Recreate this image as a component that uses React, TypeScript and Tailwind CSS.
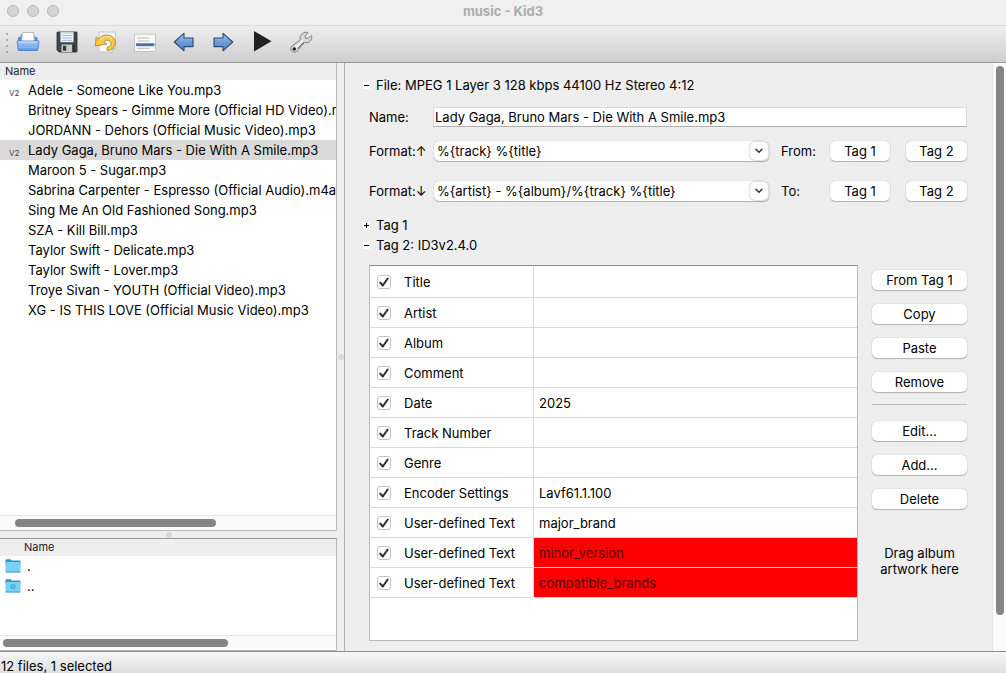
import React, { useState } from "react";

const files = [
  { name: "Adele - Someone Like You.mp3", tagged: true },
  { name: "Britney Spears - Gimme More (Official HD Video).mp3" },
  { name: "JORDANN - Dehors (Official Music Video).mp3" },
  { name: "Lady Gaga, Bruno Mars - Die With A Smile.mp3", tagged: true },
  { name: "Maroon 5 - Sugar.mp3" },
  { name: "Sabrina Carpenter - Espresso (Official Audio).m4a" },
  { name: "Sing Me An Old Fashioned Song.mp3" },
  { name: "SZA - Kill Bill.mp3" },
  { name: "Taylor Swift - Delicate.mp3" },
  { name: "Taylor Swift - Lover.mp3" },
  { name: "Troye Sivan - YOUTH (Official Video).mp3" },
  { name: "XG - IS THIS LOVE (Official Music Video).mp3" },
];

const frames = [
  { label: "Title", value: "" },
  { label: "Artist", value: "" },
  { label: "Album", value: "" },
  { label: "Comment", value: "" },
  { label: "Date", value: "2025" },
  { label: "Track Number", value: "" },
  { label: "Genre", value: "" },
  { label: "Encoder Settings", value: "Lavf61.1.100" },
  { label: "User-defined Text", value: "major_brand" },
  { label: "User-defined Text", value: "minor_version", invalid: true },
  { label: "User-defined Text", value: "compatible_brands", invalid: true },
];

function OpenIcon() {
  return (
    <svg width="24" height="24" viewBox="0 0 24 24" aria-hidden="true">
      <defs>
        <linearGradient id="tray" x1="0" y1="0" x2="0" y2="1">
          <stop offset="0" stopColor="#a9cdf5" />
          <stop offset="1" stopColor="#5c97de" />
        </linearGradient>
      </defs>
      <path d="M2.5 12V7.5H5V5h13v2.5h3V12z" fill="#5f93d3" stroke="#4f82c4" />
      <path d="M5.5 13L6.3 2.5h11.4L18.5 13z" fill="#fdfdfd" stroke="#a9adb3" strokeWidth=".8" />
      <path d="M1 11h22l-1.3 9.5H2.3z" fill="url(#tray)" stroke="#4c84cc" strokeWidth=".9" />
      <path d="M2 12h20" stroke="#cde2fa" />
      <path d="M3 17.5h18" stroke="#89b8ee" />
    </svg>
  );
}

function SaveIcon() {
  return (
    <svg width="24" height="24" viewBox="0 0 24 24" aria-hidden="true">
      <path d="M2 2.5Q2 2 2.5 2h19q.5 0 .5.5v19q0 .5-.5.5H4L2 20z" fill="#43474c" stroke="#25282b" strokeWidth=".8" />
      <path d="M5.5 2.2h13v10h-13z" fill="#f5f8fb" />
      <path d="M5.5 2.2h13v1.6h-13z" fill="#cfd6dd" />
      <path d="M7 5.5h10M7 8h10M7 10.4h10" stroke="#91b4d8" strokeWidth=".9" />
      <path d="M6.5 14.5h11V22h-11z" fill="#c9ccce" />
      <path d="M8 15.8h3.2v4.8H8z" fill="#303338" />
      <path d="M17.5 14.5h1.8V22h-1.8z" fill="#1f2225" />
    </svg>
  );
}

function RevertIcon() {
  return (
    <svg width="24" height="24" viewBox="0 0 24 24" aria-hidden="true">
      <path d="M5 2h16.5v16.5L18 22H5z" fill="#f7f7f7" stroke="#bdbdbd" strokeWidth=".8" />
      <path d="M21.5 18H18v4z" fill="#d5d5d5" stroke="#bdbdbd" strokeWidth=".6" />
      <path
        d="M2 7l2.8 2.2C7.5 4 16 3.6 19.8 8.2c4 5-.1 12.3-6.6 12.3v-3c4-1.1 4.6-4.1 2.8-6-2-2.1-4.8-1.3-6 .5l2.6 2L1.5 16z"
        fill="#f3c84b"
        stroke="#b78618"
        strokeWidth=".9"
        strokeLinejoin="round"
      />
      <path d="M6 10.2c3-4.8 9.3-4.8 12.3-1" fill="none" stroke="#fbe698" strokeWidth="1.2" />
    </svg>
  );
}

function PlaylistIcon() {
  return (
    <svg width="24" height="24" viewBox="0 0 24 24" aria-hidden="true">
      <path d="M1.5 4.5h21v17h-21z" fill="#fafafa" stroke="#b9bcc0" strokeWidth=".9" />
      <path d="M1.5 4.3h21" stroke="#d6d6d6" strokeWidth="1.4" />
      <path d="M4 8h12.5M5 11h11M4 18.3h13" stroke="#a9a9a9" strokeWidth=".8" />
      <path d="M3 13.2h18.5v3H3z" fill="#4f83bd" />
      <path d="M4 15h16" stroke="#28598f" strokeWidth=".7" />
    </svg>
  );
}

function ArrowIcon({ dir }: { dir: "left" | "right" }) {
  const id = "arrow-" + dir;
  return (
    <svg width="24" height="24" viewBox="0 0 24 24" aria-hidden="true">
      <defs>
        <linearGradient id={id} x1="0" y1="0" x2="0" y2="1">
          <stop offset="0" stopColor="#b1cae8" />
          <stop offset=".5" stopColor="#6e9bd2" />
          <stop offset="1" stopColor="#5588c6" />
        </linearGradient>
      </defs>
      <path
        d={dir === "left" ? "M2.3 12L12 3.4V8h9v8.6h-9v4.2z" : "M21.7 12L12 3.4V8H3v8.6h9v4.2z"}
        fill={"url(#" + id + ")"}
        stroke="#24497b"
        strokeWidth="1.1"
        strokeLinejoin="round"
      />
    </svg>
  );
}

function PlayIcon() {
  return (
    <svg width="24" height="24" viewBox="0 0 24 24" aria-hidden="true">
      <path d="M4 1l17.5 10.2L4 21.5z" fill="#222" />
    </svg>
  );
}

function WrenchIcon() {
  return (
    <svg width="24" height="24" viewBox="0 0 24 24" aria-hidden="true">
      <path
        d="M2 20c-.7-1.8.2-3.6 2-4.5l7.2-5.7C10.500 5.500 13.500 2 18 2.200l1 .6-3 3 .6 2.400 2.400.3 3.200-3 .6 1.200c.2 4.300-3.600 6.800-7.400 5.800L9.300 19.600C8.300 22.500 3.500 23.500 2 20z"
        fill="#d9dadb"
        stroke="#737577"
        strokeWidth=".9"
        strokeLinejoin="round"
      />
      <path d="M6.500 17.500l7.500-7" stroke="#fff" strokeWidth="1.500" />
      <path d="M8.800 18.500l6-6.300" stroke="#555" strokeWidth=".9" />
      <circle cx="5.300" cy="19" r="1.700" fill="#222" />
    </svg>
  );
}

function FolderIcon({ badge = false }: { badge?: boolean }) {
  return (
    <svg width="16" height="16" viewBox="0 0 16 16" aria-hidden="true">
      <path d="M.5 2.200Q.5 1.300 1.400 1.300h4l1.400 1.300h7.800q.9 0 .9.900v3H.5z" fill="#3c93b8" />
      <path d="M.5 4h15v9.700q0 .8-.8.8H1.300q-.8 0-.8-.8z" fill="#7acff5" />
      <path d="M.6 14h14.800" stroke="#4a9fc4" />
      {badge && (
        <>
          <circle cx="8" cy="8.500" r="2.600" fill="#4ba9d6" />
          <circle cx="8" cy="8.500" r="1" fill="#7acff5" />
        </>
      )}
    </svg>
  );
}

const buttonLook = "h-5 rounded-[5px] bg-white text-center leading-5 shadow-[0_0_1px_rgba(0,0,0,0.35),0_1px_1px_rgba(0,0,0,0.22)] active:bg-gray-200";

function PushButton({ children, className = "" }: { children: React.ReactNode; className?: string }) {
  return (
    <button type="button" className={`${buttonLook} ${className}`}>
      {children}
    </button>
  );
}

function Toggle({ open, onClick, children }: { open: boolean; onClick?: () => void; children: React.ReactNode }) {
  return (
    <button type="button" aria-expanded={open} onClick={onClick} className="flex h-5 items-center gap-[6px] text-left">
      <svg width="7" height="7" viewBox="0 0 7 7" aria-hidden="true" className="bg-white">
        <path d={open ? "M1 3.500h5" : "M1 3.500h5M3.500 1v5"} stroke="#000" fill="none" />
      </svg>
      {children}
    </button>
  );
}

function FormatSelect({ id, value }: { id: string; value: string }) {
  return (
    <div className="relative mr-3 flex-1">
      <select
        id={id}
        defaultValue={value}
        className="block h-5 w-full appearance-none rounded-[5px] bg-white pl-[3px] pr-6 leading-5 shadow-[0_0_1px_rgba(0,0,0,0.35),0_1px_1px_rgba(0,0,0,0.22)] outline-none"
      >
        <option>{value}</option>
      </select>
      <span className="pointer-events-none absolute right-px top-px flex size-[18px] items-center justify-center rounded-[5px] bg-white shadow-[0_0_2px_rgba(0,0,0,0.45)]">
        <svg width="8" height="6" viewBox="0 0 8 6" aria-hidden="true">
          <path d="M1 1.200l3 3 3-3" fill="none" stroke="#333" strokeWidth="1.500" strokeLinecap="round" strokeLinejoin="round" />
        </svg>
      </span>
    </div>
  );
}

function FormatRow({ id, arrow, value, target }: { id: string; arrow: string; value: string; target: string }) {
  return (
    <div className="flex items-center">
      <label htmlFor={id} className="w-[65px] shrink-0">
        Format:{arrow}
      </label>
      <FormatSelect id={id} value={value} />
      <span className="w-[49px]">{target}</span>
      <PushButton className="mr-4 w-[60px]">Tag 1</PushButton>
      <PushButton className="w-[61px]">Tag 2</PushButton>
    </div>
  );
}

export default function App() {
  const [selected, setSelected] = useState(3);
  const [fileOpen, setFileOpen] = useState(true);
  const [tag1Open, setTag1Open] = useState(false);
  const [tag2Open, setTag2Open] = useState(true);

  const tools = [
    { label: "Open", icon: <OpenIcon /> },
    { label: "Save", icon: <SaveIcon /> },
    { label: "Revert", icon: <RevertIcon /> },
    { label: "Create Playlist", icon: <PlaylistIcon /> },
    { label: "Previous File", icon: <ArrowIcon dir="left" /> },
    { label: "Next File", icon: <ArrowIcon dir="right" /> },
    { label: "Play", icon: <PlayIcon /> },
    { label: "Configure", icon: <WrenchIcon /> },
  ];

  return (
    <div className="flex h-screen flex-col overflow-hidden bg-[#eeeeee] font-['Inter','Liberation_Sans',sans-serif] text-[13px] leading-5 text-black">
      <header className="grid h-[26px] shrink-0 grid-cols-[1fr_auto_1fr] items-center border-b border-[#dcdcdc] bg-[#f0f0f0] pb-1">
        <div className="flex gap-2 pl-[7px]">
          <span className="size-3 rounded-full border border-[#b9b9b9] bg-[#d5d5d5]" />
          <span className="size-3 rounded-full border border-[#b9b9b9] bg-[#d5d5d5]" />
          <span className="size-3 rounded-full border border-[#b9b9b9] bg-[#d5d5d5]" />
        </div>
        <h1 className="font-bold text-[#adadad]">music - Kid3</h1>
      </header>

      <div role="toolbar" className="flex h-[37px] shrink-0 items-center border-b border-[#999] bg-linear-to-b from-[#efefef] to-[#cecece] pb-1 pl-[5px]">
        <svg width="4" height="22" viewBox="0 0 4 22" aria-hidden="true" className="mr-[7px]">
          <path d="M2 2v20" stroke="#aaa" strokeWidth="2" strokeDasharray="2 4" />
        </svg>
        <div className="flex gap-[15px]">
          {tools.map((t) => (
            <button key={t.label} type="button" aria-label={t.label} className="size-6">
              {t.icon}
            </button>
          ))}
        </div>
      </div>

      <main className="flex min-h-0 flex-1">
        <div className="flex w-[337px] shrink-0 flex-col">
          <section className="flex min-h-0 flex-1 flex-col border-b border-r border-[#b8b8b8] bg-white">
            <h2 className="h-[17px] shrink-0 bg-[#eeeeee] pl-[5px] text-[11px] leading-4 text-[#222]">Name</h2>
            <ul className="min-h-0 flex-1 overflow-hidden">
              {files.map((f, i) => (
                <li key={f.name}>
                  <button
                    type="button"
                    onClick={() => setSelected(i)}
                    className={`flex h-5 w-full items-center overflow-hidden whitespace-nowrap text-left ${i === selected ? "bg-[#dadada]" : ""}`}
                  >
                    <span className="w-7 shrink-0 pl-[9px] pt-[6px] text-[8px] leading-3 text-[#444]">{f.tagged ? "V2" : ""}</span>
                    {f.name}
                  </button>
                </li>
              ))}
            </ul>
            <div className="flex h-[15px] shrink-0 items-center border-t border-[#e6e6e6] bg-[#fafafa] pl-[15px]">
              <span className="h-2 w-[201px] rounded-full bg-[#858585]" />
            </div>
          </section>

          <div className="flex h-[7px] shrink-0 items-center justify-center">
            <span className="size-[6px] rounded-full bg-[#d8d8d8]" />
          </div>

          <section className="flex h-[113px] shrink-0 flex-col border-b border-r border-t border-[#b8b8b8] border-t-[#999] bg-white">
            <h2 className="h-[17px] shrink-0 bg-[#eeeeee] pl-6 text-[11px] leading-4 text-[#222]">Name</h2>
            <ul className="flex-1">
              {[".", ".."].map((d) => (
                <li key={d} className="flex h-5 items-center gap-[6px] pl-[5px]">
                  <FolderIcon badge={d === ".."} />
                  {d}
                </li>
              ))}
            </ul>
            <div className="flex h-[15px] shrink-0 items-center border-t border-[#e6e6e6] bg-[#fafafa] pl-[3px]">
              <span className="h-2 w-[225px] rounded-full bg-[#858585]" />
            </div>
          </section>
        </div>

        <div className="flex w-[7px] shrink-0 items-center justify-center">
          <span className="size-[6px] rounded-full bg-[#d8d8d8]" />
        </div>

        <section className="flex min-w-0 flex-1 border-l border-[#b0b0b0]">
          <div className="flex min-w-0 flex-1 flex-col pb-[10px] pl-[18px] pr-[25px] pt-3">
            <Toggle open={fileOpen} onClick={() => setFileOpen(!fileOpen)}>
              File: MPEG 1 Layer 3 128 kbps 44100 Hz Stereo 4:12
            </Toggle>
            {fileOpen && (
              <div className="mb-[14px] mt-3 flex flex-col gap-5 pl-[6px]">
                <div className="-mb-[6px] flex items-center">
                  <label htmlFor="file-name" className="w-16 shrink-0">
                    Name:
                  </label>
                  <input
                    id="file-name"
                    type="text"
                    defaultValue="Lady Gaga, Bruno Mars - Die With A Smile.mp3"
                    className="h-5 min-w-0 flex-1 border border-[#d8d8d8] border-b-[#b0b0b0] bg-white px-px outline-none"
                  />
                </div>
                <FormatRow id="format-up" arrow="↑" value="%{track} %{title}" target="From:" />
                <FormatRow id="format-down" arrow="↓" value="%{artist} - %{album}/%{track} %{title}" target="To:" />
              </div>
            )}
            <Toggle open={tag1Open} onClick={() => setTag1Open(!tag1Open)}>
              Tag 1
            </Toggle>
            <Toggle open={tag2Open} onClick={() => setTag2Open(!tag2Open)}>
              Tag 2: ID3v2.4.0
            </Toggle>
            {tag2Open && (
              <div className="mt-[10px] flex min-h-0 flex-1 gap-[14px] pl-[6px]">
                <div className="min-w-0 flex-1 overflow-hidden border border-[#b8b8b8] border-t-[#8f8f8f] bg-white">
                  <table className="w-full table-fixed border-separate border-spacing-0">
                    <colgroup>
                      <col className="w-[164px]" />
                      <col />
                    </colgroup>
                    <tbody>
                      {frames.map((f, i) => (
                        <tr key={i} className="h-[30px] first:h-8">
                          <td className="border-b border-r border-[#d9d9d9] p-0">
                            <label className="flex items-center gap-[13px] pl-[7px]">
                              <span className="relative size-[14px]">
                                <input
                                  type="checkbox"
                                  defaultChecked
                                  className="peer block size-[14px] appearance-none rounded-[3px] border border-[#c4c4c4] bg-white"
                                />
                                <svg
                                  width="14"
                                  height="14"
                                  viewBox="0 0 14 14"
                                  aria-hidden="true"
                                  className="pointer-events-none absolute inset-0 hidden peer-checked:block"
                                >
                                  <path d="M3.300 7.600l2.500 2.900 4.900-7" fill="none" stroke="#2b2b2b" strokeWidth="2" strokeLinecap="round" strokeLinejoin="round" />
                                </svg>
                              </span>
                              {f.label}
                            </label>
                          </td>
                          <td className={`border-b border-[#d9d9d9] p-0 pl-[5px] ${f.invalid ? "bg-[#ff0000] text-[#500000]" : ""}`}>{f.value}</td>
                        </tr>
                      ))}
                    </tbody>
                  </table>
                </div>

                <div className="flex w-[95px] shrink-0 flex-col pt-[5px]">
                  <div className="flex flex-col gap-[14px]">
                    <PushButton>From Tag 1</PushButton>
                    <PushButton>Copy</PushButton>
                    <PushButton>Paste</PushButton>
                    <PushButton>Remove</PushButton>
                  </div>
                  <hr className="mb-4 mt-3 border-[#bbb]" />
                  <div className="flex flex-col gap-[14px]">
                    <PushButton>Edit...</PushButton>
                    <PushButton>Add...</PushButton>
                    <PushButton>Delete</PushButton>
                  </div>
                  <p className="mt-9 px-2 text-center leading-4">Drag album artwork here</p>
                </div>
              </div>
            )}
          </div>
          <div className="flex w-[14px] shrink-0 justify-center border-l border-[#e4e4e4] bg-[#fafafa] pt-[3px]">
            <span className="h-[549px] w-2 rounded-full bg-[#858585]" />
          </div>
        </section>
      </main>

      <footer className="h-[22px] shrink-0 border-t border-[#8c8c8c] bg-linear-to-b from-[#f7f7f7] to-[#dedede] pl-px pt-1">12 files, 1 selected</footer>
    </div>
  );
}
